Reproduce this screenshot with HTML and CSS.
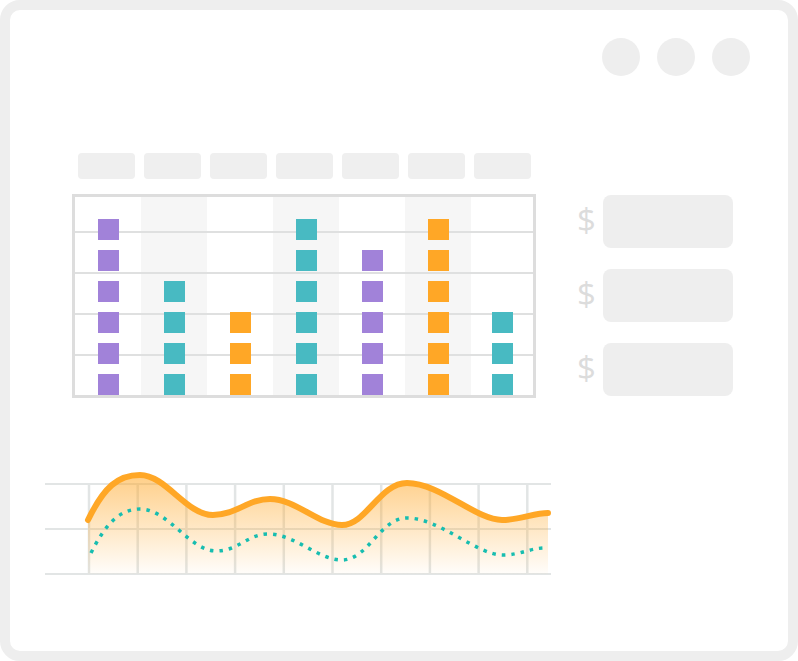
FILE: index.html
```html
<!DOCTYPE html>
<html lang="en">
<head>
    <meta charset="UTF-8">
    <meta name="viewport" content="width=device-width, initial-scale=1.0">
    <title>Dashboard sketch</title>
    <link rel="stylesheet" href="styles.css">
</head>
<body>
    <div class="window">
        <!-- Window controls -->
        <div class="controls">
            <span class="control"></span>
            <span class="control"></span>
            <span class="control"></span>
        </div>

        <div class="main">
            <!-- Bar board -->
            <div class="board">
                <div class="labels">
                    <span class="label"></span>
                    <span class="label"></span>
                    <span class="label"></span>
                    <span class="label"></span>
                    <span class="label"></span>
                    <span class="label"></span>
                    <span class="label"></span>
                </div>

                <div class="grid">
                    <div class="col">
                        <span class="cell purple"></span>
                        <span class="cell purple"></span>
                        <span class="cell purple"></span>
                        <span class="cell purple"></span>
                        <span class="cell purple"></span>
                        <span class="cell purple"></span>
                    </div>
                    <div class="col shaded">
                        <span class="cell teal"></span>
                        <span class="cell teal"></span>
                        <span class="cell teal"></span>
                        <span class="cell teal"></span>
                    </div>
                    <div class="col">
                        <span class="cell orange"></span>
                        <span class="cell orange"></span>
                        <span class="cell orange"></span>
                    </div>
                    <div class="col shaded">
                        <span class="cell teal"></span>
                        <span class="cell teal"></span>
                        <span class="cell teal"></span>
                        <span class="cell teal"></span>
                        <span class="cell teal"></span>
                        <span class="cell teal"></span>
                    </div>
                    <div class="col">
                        <span class="cell purple"></span>
                        <span class="cell purple"></span>
                        <span class="cell purple"></span>
                        <span class="cell purple"></span>
                        <span class="cell purple"></span>
                    </div>
                    <div class="col shaded">
                        <span class="cell orange"></span>
                        <span class="cell orange"></span>
                        <span class="cell orange"></span>
                        <span class="cell orange"></span>
                        <span class="cell orange"></span>
                        <span class="cell orange"></span>
                    </div>
                    <div class="col">
                        <span class="cell teal"></span>
                        <span class="cell teal"></span>
                        <span class="cell teal"></span>
                    </div>
                </div>
            </div>

            <!-- Amounts -->
            <div class="ledger">
                <div class="amount"><span class="currency">$</span><span class="field"></span></div>
                <div class="amount"><span class="currency">$</span><span class="field"></span></div>
                <div class="amount"><span class="currency">$</span><span class="field"></span></div>
            </div>
        </div>

        <!-- Trend chart -->
        <svg class="trend" width="520" height="120" viewBox="40 462 520 120">
            <defs>
                <linearGradient id="area" x1="0" y1="474" x2="0" y2="573" gradientUnits="userSpaceOnUse">
                    <stop offset="0" stop-color="#ffa726" stop-opacity="0.55"/>
                    <stop offset="1" stop-color="#ffa726" stop-opacity="0.02"/>
                </linearGradient>
            </defs>
            <g stroke="#e2e5e5" stroke-width="2">
                <line x1="45" y1="483" x2="551" y2="483"/>
                <line x1="45" y1="528" x2="551" y2="528"/>
                <line x1="45" y1="573" x2="551" y2="573"/>
            </g>
            <g stroke="#e2e5e5" stroke-width="2.5">
                <line x1="89" y1="483" x2="89" y2="573"/>
                <line x1="137.7" y1="483" x2="137.7" y2="573"/>
                <line x1="186.4" y1="483" x2="186.4" y2="573"/>
                <line x1="235.1" y1="483" x2="235.1" y2="573"/>
                <line x1="283.8" y1="483" x2="283.8" y2="573"/>
                <line x1="332.5" y1="483" x2="332.5" y2="573"/>
                <line x1="381.2" y1="483" x2="381.2" y2="573"/>
                <line x1="429.9" y1="483" x2="429.9" y2="573"/>
                <line x1="478.6" y1="483" x2="478.6" y2="573"/>
                <line x1="527.3" y1="483" x2="527.3" y2="573"/>
            </g>
            <path fill="url(#area)" d="M88,519 C104,486 118,474 140,474 C166,474 186,514 213,514 C236,514 248,498 270,498 C296,498 318,524 342,524 C366,524 380,482 407,482 C440,482 476,519 502,519 C520,519 534,512 548,512 L548,573 L88,573 Z"/>
            <path fill="none" stroke="#ffa726" stroke-width="6" stroke-linecap="round" d="M88,519 C104,486 118,474 140,474 C166,474 186,514 213,514 C236,514 248,498 270,498 C296,498 318,524 342,524 C366,524 380,482 407,482 C440,482 476,519 502,519 C520,519 534,512 548,512"/>
            <path fill="none" stroke="#17bdb0" stroke-width="3.5" stroke-dasharray="3.5 6" d="M91,552 C104,526 118,508 140,508 C168,508 190,550 216,550 C238,550 248,533 268,533 C295,533 318,559 342,559 C368,559 380,517 407,517 C440,517 476,554 503,554 C520,554 530,547 545,547"/>
        </svg>
    </div>
</body>
</html>
```

FILE: styles.css
```css
body {
    margin: 0;
    background-color: #fff;
    font-family: 'Open Sans', sans-serif;
}

.window {
    box-sizing: border-box;
    width: 798px;
    height: 661px;
    border: 10px solid #eeeeee;
    border-radius: 20px;
    background-color: #fff;
    display: flex;
    flex-direction: column;
}

.controls {
    display: flex;
    justify-content: flex-end;
    gap: 17px;
    padding: 28px 38px 0 0;
}

.control {
    width: 38px;
    height: 38px;
    border-radius: 50%;
    background-color: #eeeeee;
}

.main {
    display: flex;
    margin-top: 77px;
}

.board {
    margin-left: 62px;
}

.labels {
    display: flex;
    gap: 9px;
    padding-left: 6px;
}

.label {
    width: 57px;
    height: 26px;
    border-radius: 4px;
    background-color: #efefef;
}

.grid {
    margin-top: 15px;
    width: 458px;
    height: 198px;
    border: 3px solid #dddddd;
    display: grid;
    grid-template-columns: repeat(6, 66px) 1fr;
}

.col {
    display: flex;
    flex-direction: column;
    justify-content: flex-end;
    align-items: center;
    gap: 10px;
    background-image: repeating-linear-gradient(to top, transparent 0 39px, #dfe0e0 39px 41px);
}

.col.shaded {
    background-color: #f6f6f6;
}

.cell {
    width: 21px;
    height: 21px;
}

.purple {
    background-color: #a182d9;
}

.teal {
    background-color: #48bac2;
}

.orange {
    background-color: #ffa726;
}

.ledger {
    margin: 42px 0 0 41px;
    display: flex;
    flex-direction: column;
    gap: 21px;
}

.amount {
    display: flex;
    align-items: center;
    gap: 8px;
}

.currency {
    width: 18px;
    color: #dcdcdc;
    font-size: 33px;
    font-weight: 400;
    line-height: 1;
    margin-top: -4px;
}

.field {
    width: 130px;
    height: 53px;
    border-radius: 8px;
    background-color: #eeeeee;
}

.trend {
    display: block;
    margin: 65px 0 0 30px;
}
```
